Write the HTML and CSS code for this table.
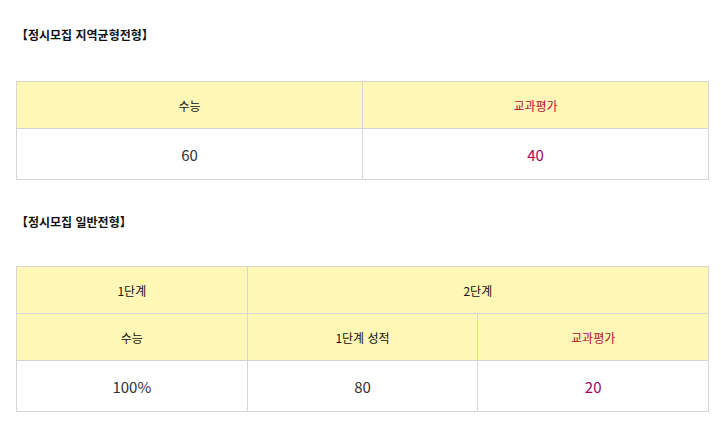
FILE: index.html
```html
<!DOCTYPE html>
<html lang="ko">
<head>
<meta charset="utf-8">
<link rel="stylesheet" href="styles.css">
</head>
<body>
<div class="wrap">
  <h3 class="title first">【정시모집 지역균형전형】</h3>
  <table class="score">
    <colgroup><col class="half"><col class="half"></colgroup>
    <tr class="head">
      <th>수능</th>
      <th class="accent">교과평가</th>
    </tr>
    <tr class="body">
      <td>60</td>
      <td class="accent">40</td>
    </tr>
  </table>

  <h3 class="title second">【정시모집 일반전형】</h3>
  <table class="score">
    <colgroup><col class="third"><col class="third"><col class="third"></colgroup>
    <tr class="head">
      <th>1단계</th>
      <th colspan="2">2단계</th>
    </tr>
    <tr class="head">
      <th>수능</th>
      <th>1단계 성적</th>
      <th class="accent">교과평가</th>
    </tr>
    <tr class="body">
      <td>100%</td>
      <td>80</td>
      <td class="accent">20</td>
    </tr>
  </table>
</div>
</body>
</html>
```
FILE: styles.css
```css
html, body {
  margin: 0;
  padding: 0;
  background: #ffffff;
}
body {
  font-family: "Noto Sans CJK KR", "Noto Sans", sans-serif;
  color: #222;
}
.wrap {
  padding: 0 12px 0 16px;
}
.title {
  margin: 0;
  font-size: 12px;
  font-weight: bold;
  line-height: 20px;
  color: #111;
}
.title.first {
  margin-top: 25px;
  margin-bottom: 36px;
}
.title.second {
  margin-top: 32px;
  margin-bottom: 34px;
}
.score {
  width: 693px;
  border-collapse: collapse;
  table-layout: fixed;
}
.score th,
.score td {
  border: 1px solid #d6d6d6;
  padding: 0;
  text-align: center;
  vertical-align: middle;
}
.score th {
  background: #fff7b6;
  font-size: 12px;
  font-weight: normal;
  color: #111;
  height: 46px;
}
.score td {
  font-size: 15px;
  color: #333;
  height: 50px;
}
.score .accent {
  color: #a4005e;
}
.score th.accent {
  color: #b00a3c;
}
.half { width: 50%; }
.third { width: 33.333%; }
```
